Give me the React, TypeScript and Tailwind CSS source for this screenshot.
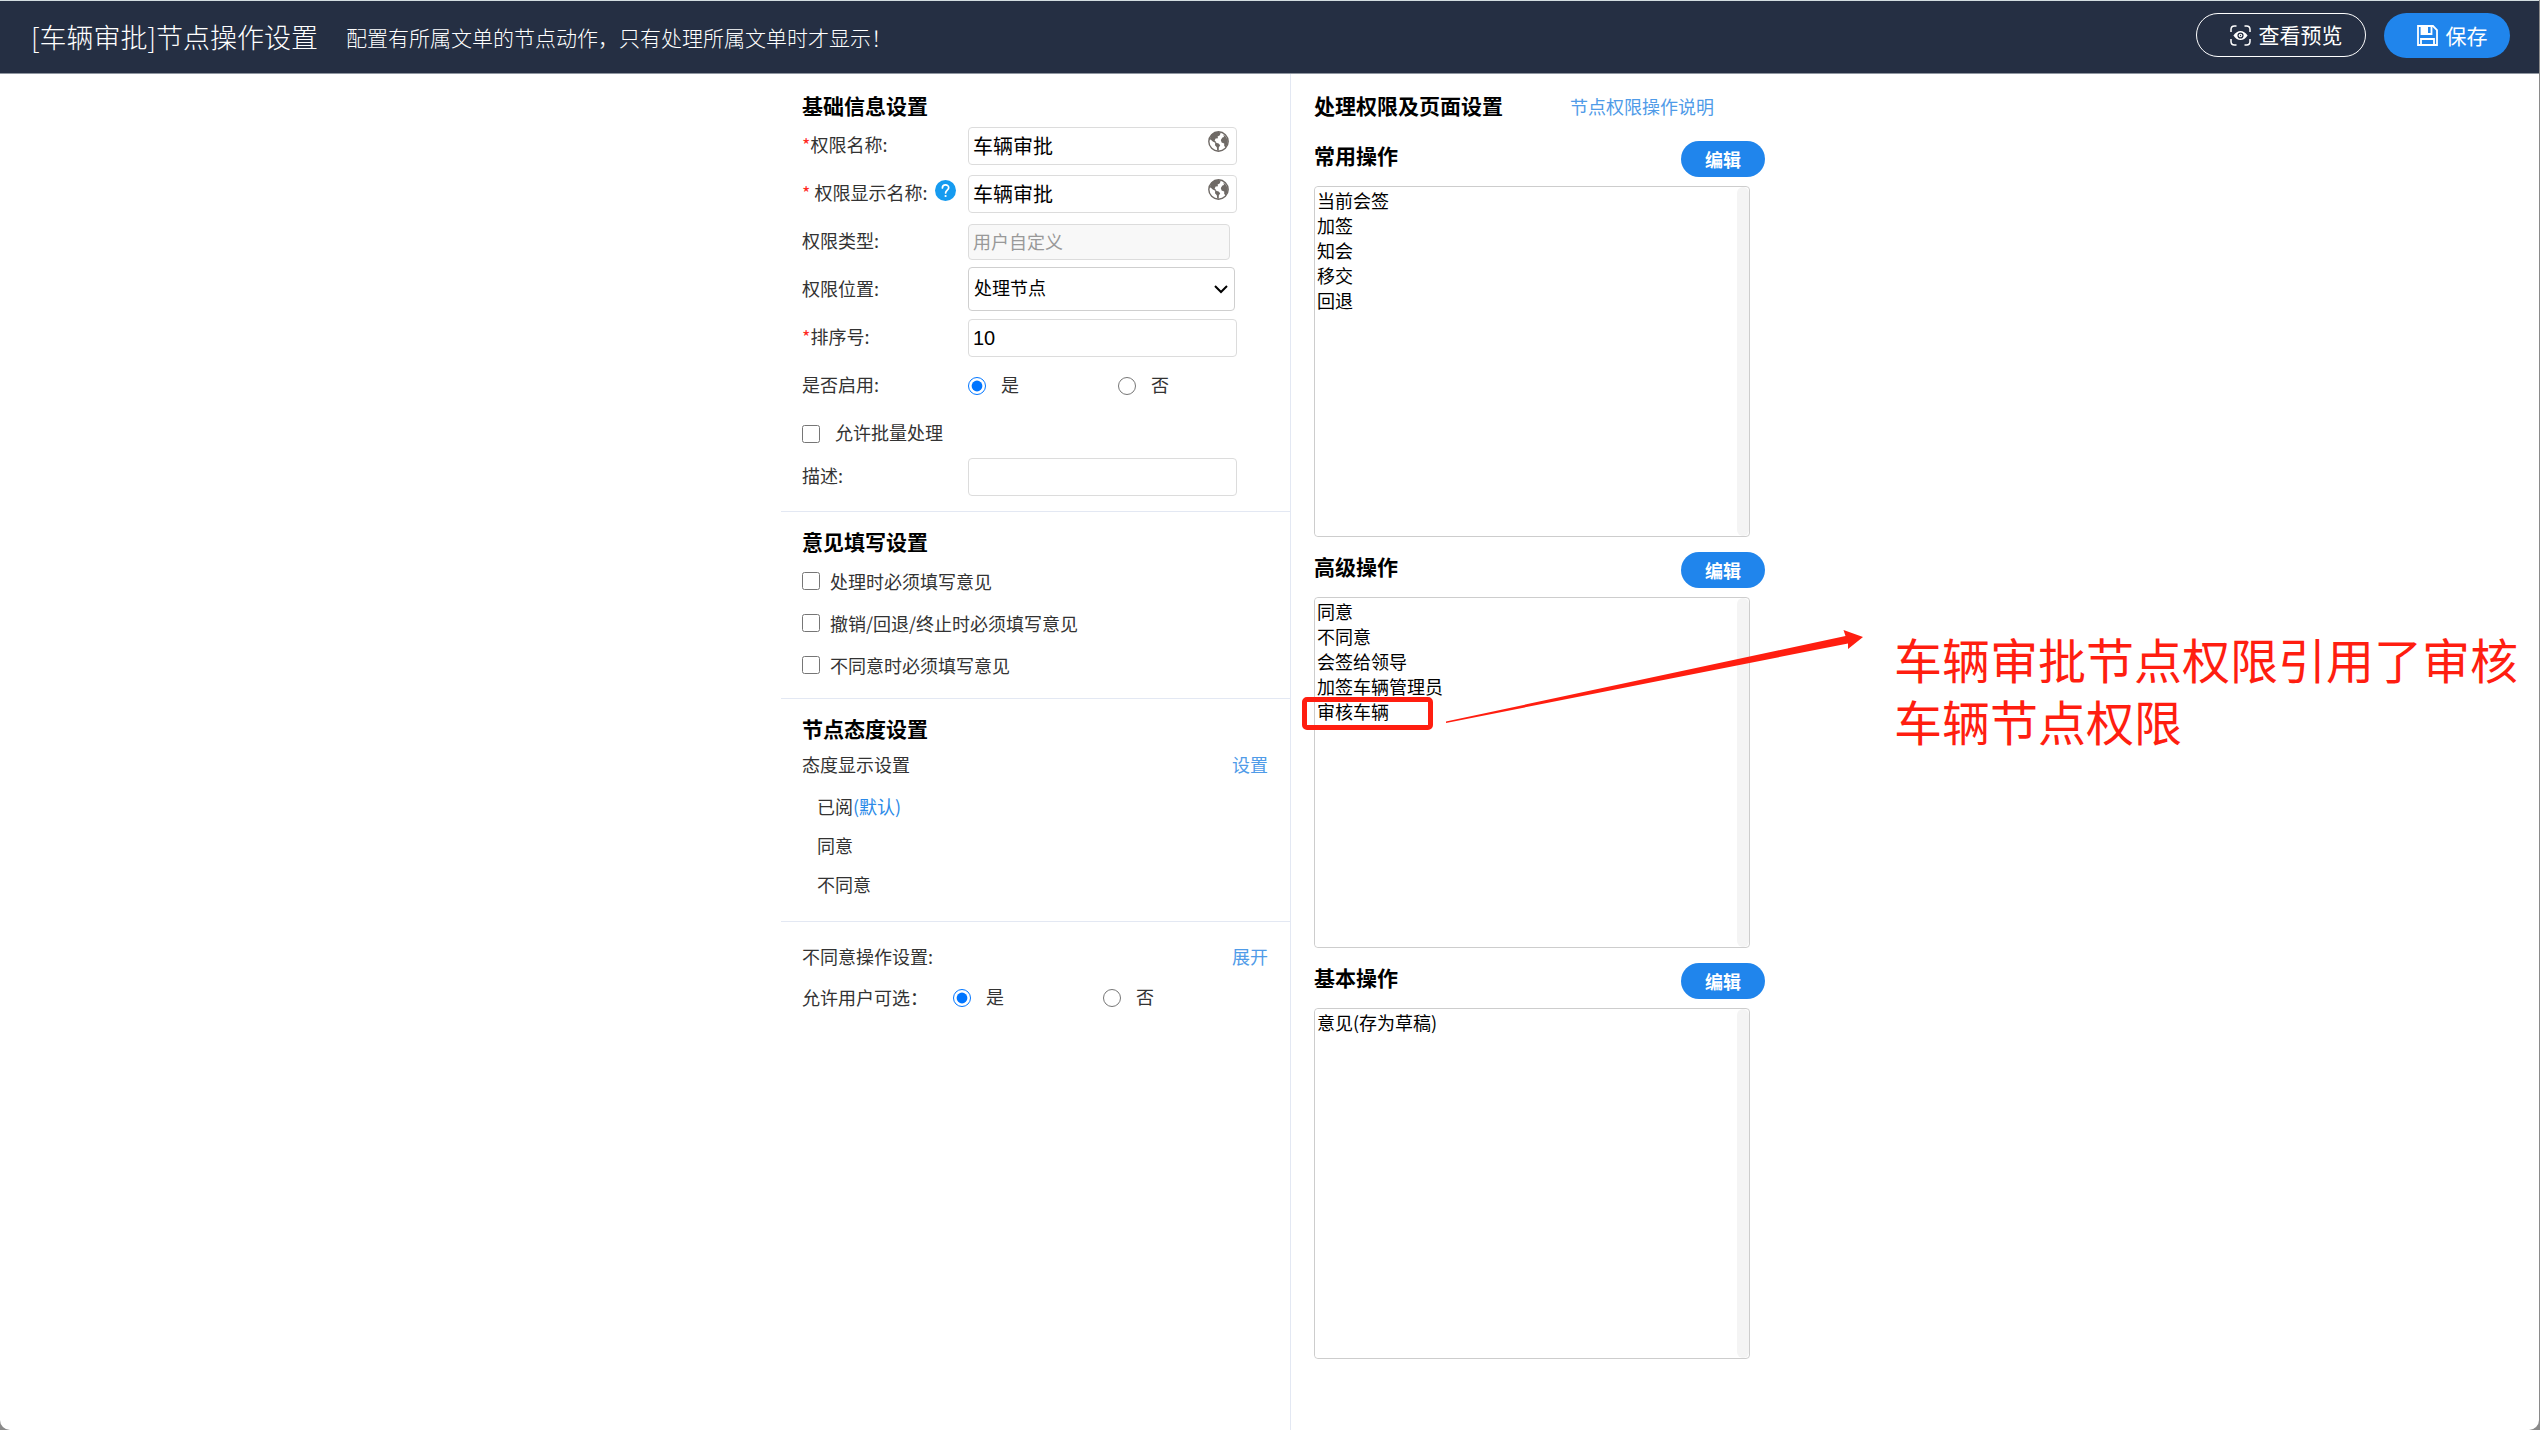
import React, { useId, useState } from "react";

const labelText = "text-[18px] leading-6 text-[#333]";
const fieldBox = "rounded-[4px] border border-[#dcdcdc] bg-white px-1 text-[20px] text-black outline-none";

function GlobeIcon() {
  return (
    <svg viewBox="0 0 21 21" className="absolute top-1 right-2 size-[21px]" aria-hidden="true">
      <circle cx="10.5" cy="10.5" r="9.7" fill="#fff" stroke="#6f6a66" strokeWidth="1.4" />
      <path
        d="M3 4.2 C5 1.8 8 .8 11.6 1.2 L12.6 2.6 L11.6 4.6 L9.6 5.4 L10 7.2 L7.6 7.6 L6.6 9.6 L8.4 11.2 L7.6 12 L4.8 10.4 L2.6 8.4 L1.6 9 Z"
        fill="#6f6a66"
      />
      <path d="M7.2 11.6 L10.6 12.4 L12.2 14.2 L10.8 16.4 L10.8 19.8 L9.2 19.4 L8.8 16.2 L7 14.2 Z" fill="#6f6a66" />
      <path
        d="M15.4 3.4 L18 5.8 L19.8 9.6 L19.6 13 L17.8 16.6 L16.2 15 L16.2 12.4 L13.6 11.4 L12.8 9 L14.4 6.6 L16 6 Z"
        fill="#6f6a66"
      />
    </svg>
  );
}

function HelpIcon() {
  return (
    <svg viewBox="0 0 21 21" className="size-[21px]" aria-hidden="true">
      <circle cx="10.5" cy="10.5" r="10.5" fill="#169bf0" />
      <path
        d="M7.4 8 C7.4 3.9 13.7 4 13.7 7.7 C13.7 10.1 10.6 10.2 10.6 13"
        fill="none"
        stroke="#fff"
        strokeWidth="1.7"
        strokeLinecap="round"
      />
      <circle cx="10.6" cy="16" r="1.1" fill="#fff" />
    </svg>
  );
}

function PreviewIcon() {
  return (
    <svg viewBox="0 0 21 21" className="size-[21px]" fill="none" stroke="#fff" strokeWidth="1.5" aria-hidden="true">
      <path d="M1 7 V4.5 Q1 1 4.5 1 H6.5 M14.5 1 H16.5 Q20 1 20 4.5 V7 M20 14 V16.5 Q20 20 16.5 20 H14.5 M6.5 20 H4.5 Q1 20 1 16.5 V14" />
      <path
        fillRule="evenodd"
        stroke="none"
        fill="#fff"
        d="M3.4 10.5 Q6.6 6 10.5 6 T17.6 10.5 Q14.4 15 10.5 15 T3.4 10.5 Z M10.5 7.4 A3.1 3.1 0 1 0 10.5 13.6 A3.1 3.1 0 1 0 10.5 7.4 Z"
      />
      <circle cx="10.5" cy="10.5" r="1.8" fill="#fff" stroke="none" />
      <circle cx="10.5" cy="10.5" r=".7" fill="#252f43" stroke="none" />
    </svg>
  );
}

function SaveIcon() {
  return (
    <svg viewBox="0 0 21 21" className="size-[21px]" fill="none" stroke="#fff" strokeWidth="1.8" aria-hidden="true">
      <path d="M1 1 H16 L20 5 V20 H1 Z" />
      <path d="M4.5 1 V9 H14.5 V1" />
      <path d="M5 1 H11 V8 H5 Z" fill="#fff" stroke="none" />
      <path d="M4 20 V14 H17 V20" />
    </svg>
  );
}

function Row({ label, required, spaced, help, htmlFor, short, children }: {
  label: string;
  required?: boolean;
  spaced?: boolean;
  help?: boolean;
  htmlFor?: string;
  short?: boolean;
  children: React.ReactNode;
}) {
  return (
    <div className={`grid grid-cols-[166px_1fr] items-center ${short ? "h-[38px]" : "h-12"}`}>
      <div className="flex items-start pb-1">
        <label htmlFor={htmlFor} className={`${labelText} whitespace-nowrap`}>
          {required && <span className="text-[#ff2a1f]">*</span>}
          {spaced && " "}
          {label}
        </label>
        {help && (
          <button type="button" aria-label="帮助" className="ml-2">
            <HelpIcon />
          </button>
        )}
      </div>
      {children}
    </div>
  );
}

function YesNo({ name }: { name: string }) {
  const [value, setValue] = useState("是");
  return (
    <div className="flex">
      {["是", "否"].map((option) => (
        <label key={option} className={`${labelText} flex w-[150px] items-center gap-[15px]`}>
          <input
            type="radio"
            name={name}
            checked={value === option}
            onChange={() => setValue(option)}
            className="size-[18px] accent-[#0075ff]"
          />
          <span className="pb-1">{option}</span>
        </label>
      ))}
    </div>
  );
}

function Check({ label, wide }: { label: string; wide?: boolean }) {
  return (
    <label className={`${labelText} flex items-center ${wide ? "h-12 gap-[15px]" : "h-[42px] gap-[10px]"}`}>
      <input type="checkbox" className="size-[18px]" />
      <span className={wide ? "pb-1" : ""}>{label}</span>
    </label>
  );
}

function OperationList({ title, items, marked }: { title: string; items: string[]; marked?: boolean }) {
  const id = useId();
  return (
    <section className="mb-[15px]">
      <div className="flex w-[451px] items-start justify-between">
        <h3 className="text-[21px] leading-7 font-bold text-black">
          <label htmlFor={id}>{title}</label>
        </h3>
        <button type="button" className="h-9 w-[84px] rounded-full bg-[#2085ec] text-[18px] leading-9 font-bold text-white">
          编辑
        </button>
      </div>
      <div className="relative mt-[9px] flex h-[351px] w-[436px] rounded-[4px] border border-[#cdcdcd] bg-white">
        <select
          id={id}
          multiple
          size={12}
          className="min-w-0 flex-1 appearance-none overflow-hidden rounded-[4px] bg-white text-[18px] text-black outline-none"
        >
          {items.map((item) => (
            <option key={item} className="h-[25px] p-0 pb-1 pl-[2px] leading-[21px]">
              {item}
            </option>
          ))}
        </select>
        <span className="w-3 rounded-full bg-[#f4f4f4]" />
        {marked && <Callout />}
      </div>
    </section>
  );
}

function Callout() {
  return (
    <>
      <span className="absolute top-[99px] -left-[13px] h-[33px] w-[131px] rounded-[5px] border-5 border-[#ff1e10]" />
      <svg viewBox="0 0 418 94" className="absolute top-[31px] left-[131px] h-[94px] w-[418px]" aria-hidden="true">
        <path d="M0 92.5 L399.500 7 L397.500 1 L417 8 L402 20 L402 14.500 L0 94 Z" fill="#ff1e10" />
      </svg>
      <p className="absolute top-[29px] left-[579px] w-[640px] text-[48px] leading-[62px] text-[#ff1e10]">
        车辆审批节点权限引用了审核车辆节点权限
      </p>
    </>
  );
}

const sectionTitle = "text-[21px] leading-7 font-bold text-black";
const link = "text-[18px] leading-6 text-[#4f9be8]";
const pill = "flex items-center justify-center gap-2 rounded-full pl-[10px] text-[21px]";

export default function App() {
  return (
    <div lang="zh-CN" className="flex min-h-screen flex-col bg-[#8a8a8a] pr-px font-['Noto_Sans_CJK_SC',sans-serif]">
      <div className="flex flex-1 flex-col overflow-hidden rounded-b-[10px] border-t border-[#d3dde0] bg-white">
        <header className="flex h-[73px] items-center border-b border-[#8f96a0] bg-[#252f43] pr-[29px] pl-[31px] text-white">
          <h1 className="text-[27px] leading-9 font-light">[车辆审批]节点操作设置</h1>
          <p className="ml-7 text-[21px] leading-9 font-light">配置有所属文单的节点动作，只有处理所属文单时才显示！</p>
          <div className="ml-auto flex gap-[18px] pb-[3px]">
            <button type="button" className={`${pill} h-11 w-[170px] border border-white`}>
              <PreviewIcon />
              查看预览
            </button>
            <button type="button" className={`${pill} h-[45px] w-[126px] bg-[#2085ec]`}>
              <SaveIcon />
              保存
            </button>
          </div>
        </header>

        <main className="flex flex-1 pl-[781px]">
          <div className="w-[510px] border-r border-[#e3e8f3]">
            <section className="border-b border-[#e3e8f3] pt-[17px] pb-[15px] pl-[21px]">
              <h2 className={`${sectionTitle} mb-[3px]`}>基础信息设置</h2>
              <Row label="权限名称:" required htmlFor="name">
                <div className="relative w-[269px]">
                  <input id="name" defaultValue="车辆审批" className={`${fieldBox} h-[38px] w-full pb-[2px]`} />
                  <GlobeIcon />
                </div>
              </Row>
              <Row label="权限显示名称:" required spaced help htmlFor="display">
                <div className="relative w-[269px]">
                  <input id="display" defaultValue="车辆审批" className={`${fieldBox} h-[38px] w-full pb-[2px]`} />
                  <GlobeIcon />
                </div>
              </Row>
              <Row label="权限类型:" htmlFor="type">
                <input
                  id="type"
                  disabled
                  defaultValue="用户自定义"
                  className="h-9 w-[262px] rounded-[4px] border border-[#dcdcdc] bg-[#f8f8f8] px-1 pb-[3px] text-[18px] text-[#999]"
                />
              </Row>
              <Row label="权限位置:" htmlFor="position">
                <div className="relative mb-[3px] w-[267px]">
                  <select
                    id="position"
                    className="h-11 w-full appearance-none rounded-[4px] border border-[#cfcfcf] bg-white px-[5px] pb-[2px] text-[18px] text-black"
                  >
                    <option>处理节点</option>
                  </select>
                  <svg viewBox="0 0 14 9" className="pointer-events-none absolute top-[18px] right-[7px] h-[9px] w-[14px]" aria-hidden="true">
                    <path d="M1 1 L7 7 L13 1" fill="none" stroke="#000" strokeWidth="2" />
                  </svg>
                </div>
              </Row>
              <Row label="排序号:" required htmlFor="order">
                <input id="order" defaultValue="10" className={`${fieldBox} h-[38px] w-[269px] font-['Liberation_Sans',sans-serif]`} />
              </Row>
              <Row label="是否启用:">
                <YesNo name="enabled" />
              </Row>
              <Check label="允许批量处理" wide />
              <Row label="描述:" htmlFor="desc" short>
                <input id="desc" className={`${fieldBox} h-[38px] w-[269px]`} />
              </Row>
            </section>

            <section className="border-b border-[#e3e8f3] pt-[15px] pb-3 pl-[21px]">
              <h2 className={sectionTitle}>意见填写设置</h2>
              <div className="mt-[5px]">
                <Check label="处理时必须填写意见" />
                <Check label="撤销/回退/终止时必须填写意见" />
                <Check label="不同意时必须填写意见" />
              </div>
            </section>

            <section className="border-b border-[#e3e8f3] pt-[15px] pr-[22px] pb-[17px] pl-[21px]">
              <h2 className={sectionTitle}>节点态度设置</h2>
              <div className="mt-[10px] mb-[11px] flex items-center justify-between">
                <span className={labelText}>态度显示设置</span>
                <a href="#attitude" className={link}>设置</a>
              </div>
              <ul className="pl-[15px] text-[18px] leading-[39px] text-[#333]">
                <li>已阅<span className="text-[#2b8ae8]">(默认)</span></li>
                <li>同意</li>
                <li>不同意</li>
              </ul>
            </section>

            <section className="pt-[22px] pr-[22px] pl-[21px]">
              <div className="flex items-center justify-between">
                <span className={labelText}>不同意操作设置:</span>
                <a href="#expand" className={link}>展开</a>
              </div>
              <div className="mt-4 flex items-center">
                <span className={`${labelText} w-[151px] pb-[3px]`}>允许用户可选：</span>
                <YesNo name="selectable" />
              </div>
            </section>
          </div>

          <div className="pt-[17px] pl-[23px]">
            <div className="flex items-center">
              <h2 className={`${sectionTitle} w-64`}>处理权限及页面设置</h2>
              <a href="#help" className={`${link} pt-[2px]`}>节点权限操作说明</a>
            </div>
            <div className="mt-[22px]">
              <OperationList title="常用操作" items={["当前会签", "加签", "知会", "移交", "回退"]} />
              <OperationList title="高级操作" items={["同意", "不同意", "会签给领导", "加签车辆管理员", "审核车辆"]} marked />
              <OperationList title="基本操作" items={["意见(存为草稿)"]} />
            </div>
          </div>
        </main>
      </div>
    </div>
  );
}
